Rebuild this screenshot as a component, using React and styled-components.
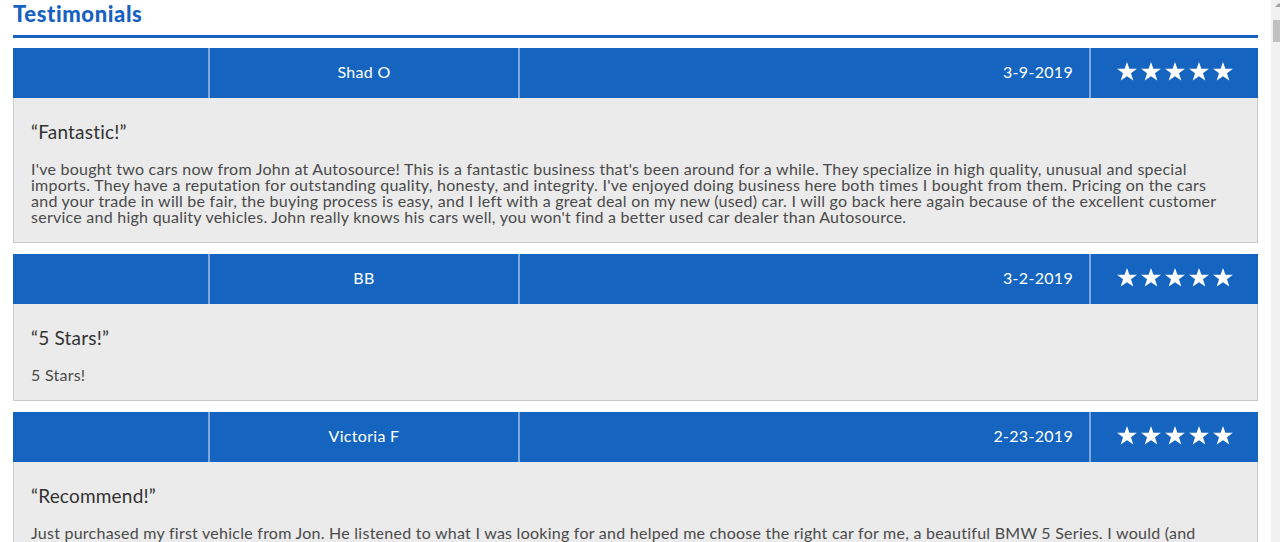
import React from 'react';
import styled, { createGlobalStyle } from 'styled-components';

const GlobalStyle = createGlobalStyle`
  html, body {
    margin: 0;
    padding: 0;
    background: #fff;
    overflow: hidden;
  }
  body {
    font-family: Lato, "Open Sans", "Liberation Sans", sans-serif;
  }
`;

const Page = styled.div`
  display: flex;
  height: 542px;
  overflow: hidden;
`;

const Main = styled.main`
  flex: 1;
  padding: 0 13px;
`;

const Heading = styled.h2`
  margin: 0 0 10px;
  padding-top: 2px;
  height: 33px;
  font-size: 22px;
  font-weight: 900;
  line-height: 24px;
  letter-spacing: 0.6px;
  color: #1761c0;
  border-bottom: 3px solid #1761c0;
`;

const Card = styled.section`
  margin-bottom: 11px;
`;

const Header = styled.div`
  display: grid;
  grid-template-columns: 195px 310px 1fr 169px;
  height: 50px;
  background: #1565c0;
  color: #fff;
  font-size: 16px;
  letter-spacing: 0.3px;
`;

const Cell = styled.div`
  display: flex;
  align-items: center;
  justify-content: ${(p) => p.$align || 'center'};
  padding: 0 16px 3px;
  border-left: ${(p) => (p.$first ? 'none' : '2px solid #7ea7db')};
`;

const Stars = styled.div`
  display: flex;
  gap: 4px;
`;

const Body = styled.div`
  background: #ebebeb;
  border: 1px solid #c9c9c9;
  border-top: none;
  padding: 22px 24px 17px 17px;
`;

const Title = styled.h3`
  margin: 0 0 17px;
  font-size: 19px;
  font-weight: 400;
  line-height: 24px;
  letter-spacing: 0.2px;
  color: #333;
`;

const Text = styled.p`
  margin: 0;
  font-size: 16px;
  line-height: 16px;
  letter-spacing: 0.25px;
  color: #4a4a4a;
`;

const Scrollbar = styled.aside`
  width: 9px;
  background: #f1f1f1;
  display: flex;
  flex-direction: column;
  align-items: flex-end;
`;

const ScrollArrow = styled.div`
  margin-top: 3px;
  margin-right: -3px;
  width: 0;
  height: 0;
  border-left: 4px solid transparent;
  border-right: 4px solid transparent;
  border-bottom: 4px solid #a3a3a3;
`;

const Thumb = styled.div`
  margin-top: 13px;
  width: 7px;
  height: 22px;
  background: #c1c1c1;
`;

const Star = () => (
  <svg width="20" height="19" viewBox="0 0 24 23">
    <path
      fill="#fff"
      d="M12 0l2.9 8.3H24l-7.2 5.4 2.8 8.8L12 17.1l-7.6 5.4 2.8-8.8L0 8.3h9.1z"
    />
  </svg>
);

const reviews = [
  {
    name: 'Shad O',
    date: '3-9-2019',
    title: 'Fantastic!',
    text:
      "I've bought two cars now from John at Autosource! This is a fantastic business that's been around for a while. They specialize in high quality, unusual and special imports. They have a reputation for outstanding quality, honesty, and integrity. I've enjoyed doing business here both times I bought from them. Pricing on the cars and your trade in will be fair, the buying process is easy, and I left with a great deal on my new (used) car. I will go back here again because of the excellent customer service and high quality vehicles. John really knows his cars well, you won't find a better used car dealer than Autosource.",
  },
  {
    name: 'BB',
    date: '3-2-2019',
    title: '5 Stars!',
    text: '5 Stars!',
  },
  {
    name: 'Victoria F',
    date: '2-23-2019',
    title: 'Recommend!',
    text:
      'Just purchased my first vehicle from Jon. He listened to what I was looking for and helped me choose the right car for me, a beautiful BMW 5 Series. I would (and have) recommended Autosource to all my friends and family.',
  },
];

const App = () => (
  <>
    <GlobalStyle />
    <Page>
      <Main>
        <Heading>Testimonials</Heading>
        {reviews.map((r) => (
          <Card key={r.name}>
            <Header>
              <Cell $first />
              <Cell>{r.name}</Cell>
              <Cell $align="flex-end">{r.date}</Cell>
              <Cell>
                <Stars>
                  {[0, 1, 2, 3, 4].map((i) => (
                    <Star key={i} />
                  ))}
                </Stars>
              </Cell>
            </Header>
            <Body>
              <Title>“{r.title}”</Title>
              <Text>{r.text}</Text>
            </Body>
          </Card>
        ))}
      </Main>
      <Scrollbar>
        <ScrollArrow />
        <Thumb />
      </Scrollbar>
    </Page>
  </>
);

export default App;
